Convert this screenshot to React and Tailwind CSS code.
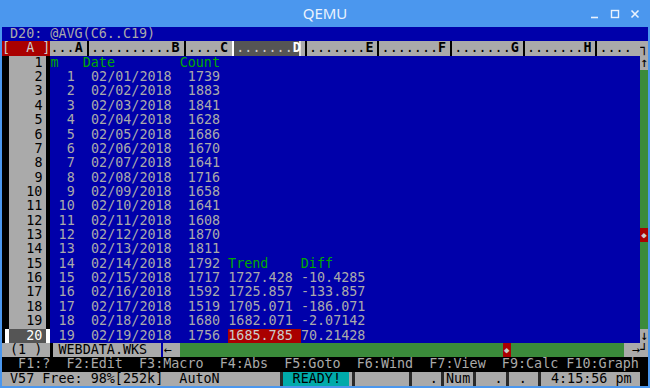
import React from "react";

const counts = [1739, 1883, 1841, 1628, 1686, 1670, 1641, 1716, 1658, 1641, 1608, 1870, 1811, 1792, 1717, 1592, 1519, 1680, 1756];
const trend = {
  16: ["1727.428", "-10.4285"],
  17: ["1725.857", "-133.857"],
  18: ["1705.071", "-186.071"],
  19: ["1682.071", "-2.07142"],
  20: ["1685.785", "70.21428"],
};

function Cell({ className = "", children }) {
  return <div className={`overflow-hidden whitespace-pre ${className}`}>{children}</div>;
}

function Row({ className = "", children }) {
  return <div className={`grid grid-cols-80 leading-[14.36px] ${className}`}>{children}</div>;
}

function RowNum({ n, current }) {
  if (current) {
    return (
      <Cell className="col-span-6 bg-[#555555] text-white text-right pr-[8px] shadow-[inset_3px_0_0_#000,inset_7px_0_0_#fff,inset_-4px_0_0_#fff]">
        {n}
      </Cell>
    );
  }
  return (
    <Cell className="col-span-6 bg-[#aaaaaa] text-black text-right pr-[8px] shadow-[inset_7px_0_0_#000,inset_-4px_0_0_#000]">
      {n}
    </Cell>
  );
}

function ScrollCell({ r }) {
  if (r === 1) return <Cell className="col-span-1 bg-[#aaaaaa] text-black text-center">↑</Cell>;
  if (r === 20) return <Cell className="col-span-1 bg-[#aaaaaa] text-black text-center">↓</Cell>;
  if (r === 13) return <Cell className="col-span-1 bg-[#aa0000] text-[#cccccc] text-center text-[9px]">◆</Cell>;
  return <Cell className="col-span-1 bg-[#3b8b3b]" />;
}

function DataRow({ r }) {
  const n = r - 1;
  const day = String(n).padStart(2, "0");
  const t = trend[r];
  return (
    <Row className="bg-[#0000aa] text-[#aaaaaa]">
      <RowNum n={r} current={r === 20} />
      {r === 1 ? (
        <>
          <Cell className="col-span-4 text-[#00aa00]">m</Cell>
          <Cell className="col-span-12 text-[#00aa00]">Date</Cell>
          <Cell className="col-span-6 text-[#00aa00]">Count</Cell>
          <Cell className="col-span-9" />
          <Cell className="col-span-9" />
        </>
      ) : (
        <>
          <Cell className="col-span-4 text-right pr-[8px]">{n}</Cell>
          <Cell className="col-span-12 text-right pr-[8px]">{`02/${day}/2018`}</Cell>
          <Cell className="col-span-6 text-right pr-[8px]">{counts[n - 1]}</Cell>
          {r === 15 ? (
            <>
              <Cell className="col-span-9 text-[#00aa00]">Trend</Cell>
              <Cell className="col-span-9 text-[#00aa00]">Diff</Cell>
            </>
          ) : t ? (
            <>
              <Cell className={r === 20 ? "col-span-9 bg-[#aa0000] text-[#cccccc] text-right pr-[8px]" : "col-span-9 text-right pr-[8px]"}>
                {t[0]}
              </Cell>
              <Cell className="col-span-9 text-right pr-[8px]">{t[1]}</Cell>
            </>
          ) : (
            <>
              <Cell className="col-span-9" />
              <Cell className="col-span-9" />
            </>
          )}
        </>
      )}
      <Cell className="col-span-33" />
      <ScrollCell r={r} />
    </Row>
  );
}

function HeaderRow() {
  const hd = "col-span-9 ml-[4px] pl-[4px] text-right shadow-[inset_2px_0_0_#000]";
  return (
    <Row className="bg-[#aaaaaa] text-black">
      <Cell className="col-span-6 bg-[#aa0000] text-[#cccccc]">{"[  A ]"}</Cell>
      <Cell className="col-span-4 text-right">
        ...<b>A</b>
      </Cell>
      <Cell className="col-span-12 ml-[4px] pl-[4px] text-right shadow-[inset_2px_0_0_#000]">
        ..........<b>B</b>
      </Cell>
      <Cell className="col-span-6 ml-[4px] pl-[4px] text-right shadow-[inset_2px_0_0_#000]">
        ....<b>C</b>
      </Cell>
      <Cell className="col-span-9 ml-[4px] pl-[4px] text-right bg-[#555555] text-[#cccccc] shadow-[inset_2px_0_0_#fff,inset_-2px_0_0_#ddd]">
        .......<b className="text-white">D</b>
      </Cell>
      <Cell className={hd}>
        .......<b>E</b>
      </Cell>
      <Cell className={hd}>
        .......<b>F</b>
      </Cell>
      <Cell className={hd}>
        .......<b>G</b>
      </Cell>
      <Cell className={hd}>
        .......<b>H</b>
      </Cell>
      <Cell className="col-span-6 ml-[4px] pl-[4px] shadow-[inset_2px_0_0_#000]">{".... "}</Cell>
      <Cell className="col-span-1 text-center">┐</Cell>
    </Row>
  );
}

function TabRow() {
  return (
    <Row className="bg-[#0000aa] text-black">
      <Cell className="col-span-6 bg-[#aaaaaa]">{" (1 ) "}</Cell>
      <Cell className="col-span-14 bg-[#aaaaaa] shadow-[inset_3px_0_0_#000,inset_-2px_0_0_#0000aa]">{" WEBDATA.WKS"}</Cell>
      <Cell className="col-span-2 bg-[#aaaaaa]">←</Cell>
      <Cell className="col-span-40 bg-[#3b8b3b]" />
      <Cell className="col-span-1 bg-[#aa0000] text-[#cccccc] text-center text-[9px]">◆</Cell>
      <Cell className="col-span-14 bg-[#3b8b3b]" />
      <Cell className="col-span-3 bg-[#aaaaaa] text-right">{"→┘"}</Cell>
    </Row>
  );
}

function StatusRow() {
  const seg = "ml-[3px] pl-[5px] shadow-[inset_3px_0_0_#2a2a2a]";
  return (
    <Row className="bg-[#aaaaaa] text-black">
      <Cell className="col-span-34">{" V57 Free: 98%[252k]  AutoN"}</Cell>
      <Cell className={`col-span-9 bg-[#00aaaa] ${seg}`}>{" READY!"}</Cell>
      <Cell className={`col-span-7 ${seg}`} />
      <Cell className={`col-span-4 ${seg}`}>{"  ."}</Cell>
      <Cell className={`col-span-4 ${seg}`}>{"Num"}</Cell>
      <Cell className={`col-span-4 ${seg}`}>{"  ."}</Cell>
      <Cell className={`col-span-4 ${seg}`}>{" ."}</Cell>
      <Cell className={`col-span-13 ${seg}`}>{" 4:15:56 pm"}</Cell>
      <Cell className="col-span-1 bg-black" />
    </Row>
  );
}

export default function App() {
  return (
    <div className="w-[650px] h-[388px] bg-[#4b97ee] overflow-hidden">
      <div className="h-[27px] grid grid-cols-[1fr_auto_1fr] items-center text-[#eaf2fd]">
        <div />
        <div className="font-['Noto_Sans',sans-serif] text-[15px]">QEMU</div>
        <div className="flex justify-end items-center gap-[10px] pr-[10px]">
          <svg width="10" height="10" viewBox="0 0 10 10">
            <path d="M1 8.5h7" stroke="currentColor" strokeWidth="1.6" />
          </svg>
          <svg width="10" height="10" viewBox="0 0 10 10">
            <rect x="1.5" y="1.5" width="7" height="7" fill="none" stroke="currentColor" strokeWidth="1.4" />
          </svg>
          <svg width="10" height="10" viewBox="0 0 10 10">
            <path d="M1.5 1.5l7 7M8.5 1.5l-7 7" stroke="currentColor" strokeWidth="1.6" />
          </svg>
        </div>
      </div>
      <div className="ml-[2px] w-[646px] h-[359px] grid grid-rows-25 bg-[#0000aa] font-['DejaVu_Sans_Mono',monospace] text-[13.4px]">
        <Row className="bg-[#0000aa] text-[#aaaaaa]">
          <Cell className="col-span-80">{" D20: @AVG(C6..C19)"}</Cell>
        </Row>
        <HeaderRow />
        {Array.from({ length: 20 }, (_, i) => (
          <DataRow key={i} r={i + 1} />
        ))}
        <TabRow />
        <Row className="bg-black text-[#aaaaaa]">
          <Cell className="col-span-80">{"  F1:?  F2:Edit  F3:Macro  F4:Abs  F5:Goto  F6:Wind  F7:View  F9:Calc F10:Graph "}</Cell>
        </Row>
        <StatusRow />
      </div>
    </div>
  );
}
